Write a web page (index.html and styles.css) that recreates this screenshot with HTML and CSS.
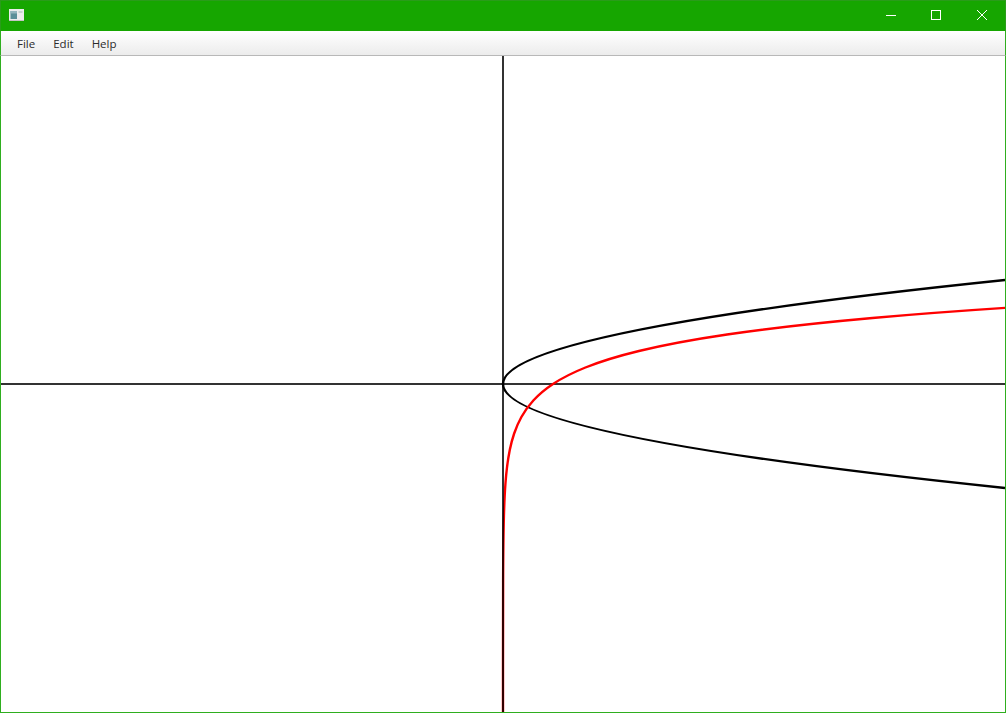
FILE: index.html
```html
<!DOCTYPE html>
<html lang="en">
<head>
<meta charset="utf-8">
<title>Plot</title>
<link rel="stylesheet" href="styles.css">
</head>
<body>
<div class="window">
  <header class="titlebar">
    <svg class="app-icon" width="15" height="12" viewBox="0 0 15 12">
      <rect x="0" y="0" width="15" height="12" fill="#ececec"/>
      <rect x="1.5" y="2" width="6.5" height="8" fill="#5b8f98"/>
      <rect x="1.5" y="2" width="6.5" height="2.5" fill="#93b5bc"/>
      <rect x="9.5" y="2" width="4" height="2" fill="#c6d2ce"/>
      <rect x="0" y="11" width="15" height="1" fill="#c4c4c4"/>
    </svg>
    <div class="controls">
      <button class="ctl" aria-label="Minimize">
        <svg width="10" height="10" viewBox="0 0 10 10"><path d="M0 5.5H10" stroke="#fff" fill="none"/></svg>
      </button>
      <button class="ctl" aria-label="Maximize">
        <svg width="10" height="10" viewBox="0 0 10 10"><rect x=".5" y=".5" width="9" height="9" stroke="#fff" fill="none"/></svg>
      </button>
      <button class="ctl" aria-label="Close">
        <svg width="10" height="10" viewBox="0 0 10 10"><path d="M0 0L10 10M10 0L0 10" stroke="#fff" fill="none"/></svg>
      </button>
    </div>
  </header>
  <nav class="menubar">
    <span class="menu">File</span>
    <span class="menu">Edit</span>
    <span class="menu">Help</span>
  </nav>
  <main class="canvas">
    <svg class="plot" viewBox="1 56 1004 656" width="1004" height="656">
      <path class="axis" d="M1 384H1005"/>
      <path class="curve-black" d="M1005 280Q1 384 1005 488"/>
      <path class="curve-red" transform="translate(.5 0)" d="M502.5 714C502.5 670 502.45 626 502.62 582C502.7 560 502.81 538 503.42 516C503.73 505 504.16 494 504.99 483C505.82 472 507.01 461 509.27 450C510.4 444.5 511.8 439 513.66 433.5C515.52 428 517.82 422.5 520.89 417C523.96 411.5 527.78 406 532.83 400.5C537.88 395 544.17 389.5 552.5 384C560.83 378.5 571.2 373 584.94 367.5C598.68 362 615.76 356.5 638.41 351C661.06 345.5 689.23 340 726.58 334.5C763.93 329 810.37 323.5 871.95 318C910.13 314.59 954.15 311.18 1006.2 307.77"/>
      <path class="axis" d="M503 56V712"/>
    </svg>
  </main>
</div>
</body>
</html>
```
FILE: styles.css
```css
html, body { margin: 0; padding: 0; height: 100%; overflow: hidden; }
.window {
  box-sizing: border-box;
  width: 1006px;
  height: 713px;
  display: flex;
  flex-direction: column;
  background: #fff;
  font-family: "Open Sans", "Noto Sans", sans-serif;
}
.titlebar {
  height: 31px;
  flex: none;
  display: flex;
  align-items: center;
  justify-content: space-between;
  background: #16a600;
  border: 1px solid #2a9c1a;
  border-bottom: 0;
  box-sizing: border-box;
  padding-left: 8px;
}
.app-icon { display: block; margin-bottom: 2px; }
.controls { display: flex; height: 100%; }
.ctl {
  box-sizing: border-box;
  width: 45px;
  height: 100%;
  padding: 0 0 2px 17px;
  border: 0;
  background: none;
  display: flex;
  align-items: center;
  justify-content: flex-start;
}
.ctl:nth-child(2) { width: 46px; }
.ctl svg { display: block; }
.menubar {
  height: 25px;
  flex: none;
  box-sizing: border-box;
  display: flex;
  align-items: center;
  gap: 18px;
  padding-left: 16px;
  background: linear-gradient(#ffffff, #ececec);
  border-bottom: 1px solid #b8b8b8;
  border-left: 1px solid #2fae1f;
  border-right: 1px solid #2fae1f;
  font-size: 11.5px;
  color: #2b2b2b;
}
.canvas {
  flex: 1;
  min-height: 0;
  border: 1px solid #2fae1f;
  border-top: 0;
}
.plot { display: block; }
.axis { stroke: rgba(0, 0, 0, .8); stroke-width: 2; fill: none; }
.curve-black { stroke: #000; stroke-width: 2.4; fill: none; }
.curve-red { stroke: #f00; stroke-width: 2.4; fill: none; }
```
